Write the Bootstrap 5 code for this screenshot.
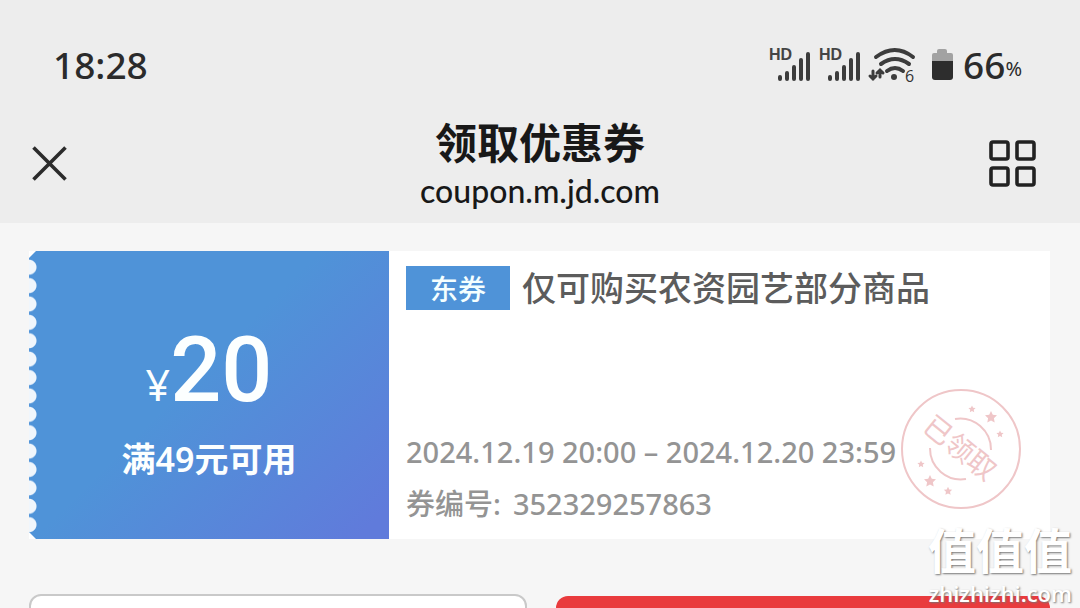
<!DOCTYPE html>
<html lang="zh-CN">
<head>
<meta charset="utf-8">
<meta name="viewport" content="width=device-width, initial-scale=1">
<title>领取优惠券</title>
<link href="https://cdn.jsdelivr.net/npm/bootstrap@5.3.0/dist/css/bootstrap.min.css" rel="stylesheet">
<style>
  body { font-family: "Noto Sans", "Noto Sans CJK SC", sans-serif; background: #f6f6f6; color: #2b2b2b; }
  .top-area { background: #ededed; height: 223px; }
  .status-line { padding: 40px 58px 0 53px; height: 90px; line-height: 50px; }
  .clock { font-size: 37px; font-weight: 500; }
  .level { font-size: 37px; font-weight: 500; }
  .level-unit { font-size: 20px; }
  .title-bar { display: grid; grid-template-columns: 1fr auto 1fr; align-items: center; padding: 14px 44px 0 32px; height: 132px; }
  .title-block { margin-left: 12px; }
  .page-title { font-size: 42px; line-height: 56px; font-weight: 700; color: #181818; }
  .page-host { font-family: Lato, sans-serif; font-size: 32px; line-height: 40px; font-weight: 500; color: #181818; }
  .content { padding: 28px 30px 0 29px; }
  .ticket { min-height: 288px; }
  .ticket-value { width: 360px; padding-top: 12px; color: #fcffff; background: linear-gradient(135deg, #4f93d8 45%, #607bdb 95%); clip-path: polygon(7px 0, 100% 0, 100% 100%, 7px 100%, 0 281px, 0 7px); }
  .ticket-value::before { content: ""; position: absolute; inset: 7px auto 5px 0; width: 8px; background: radial-gradient(circle at 0 50%, #f0f6fc 7px, transparent 8px) 0 0 / 8px 18px; background-repeat: no-repeat round; }
  .yuan { font-size: 43px; line-height: 60px; }
  .amount { font-family: Roboto, sans-serif; font-size: 90px; line-height: 104px; font-weight: 500; }
  .condition { font-size: 34px; line-height: 48px; font-weight: 600; margin-top: 12px; }
  .ticket-info { padding: 15px 16px 9px 17px; color: #949494; }
  .kind-tag { background: #4f93d8; color: #f4ffff; font-size: 28px; line-height: 46px; width: 104px; height: 44px; font-weight: 500; }
  .scope-text { font-size: 34px; line-height: 44px; color: #5c5c5c; }
  .meta-text { font-size: 29px; line-height: 52px; font-weight: 500; }
  .stamp { right: 28px; top: 138px; }
  .actions { padding-top: 55px; gap: 29px; }
  .act { height: 88px; border-radius: 12px; }
  .act-plain { background: #fff; border: 2px solid #c9c9c9; }
  .act-main { background: #e93b3d; margin-top: 2px; border: 0; }
  .wm { right: 8px; bottom: 2px; color: #fff; text-shadow: 1px 1px 2px #777; }
  .wm-name { font-size: 48px; line-height: 58px; font-weight: 700; }
  .wm-site { font-family: "Open Sans", sans-serif; font-size: 22px; line-height: 26px; font-weight: 600; }
</style>
</head>
<body>
<div class="vh-100 overflow-hidden position-relative">
  <header class="top-area">
    <div class="status-line d-flex justify-content-between">
      <span class="clock">18:28</span>
      <div class="d-flex align-items-center">
        <svg width="187" height="50" viewBox="767 40 187 50" aria-hidden="true">
          <g font-family="Liberation Sans, sans-serif" font-weight="700" font-size="16" fill="#444">
            <text x="768" y="60">HD</text><text x="818" y="60">HD</text>
          </g>
          <g stroke="#3c3c3c" stroke-width="4" stroke-linecap="round">
            <path d="M779 77v2M786 73v6M793 67v12M800 60v19M807 54v25M829 77v2M836 73v6M843 67v12M850 60v19M857 54v25"/>
            <path d="M875 57q19-14 37 0M880 64q14-10 28 0M886 71q8-6 16 0" fill="none"/>
            <path d="M872 71v8m-3-3l3 3 3-3M879 77v-7m-3 3l3-3 3 3" fill="none" stroke-width="3"/>
          </g>
          <circle cx="893" cy="77" r="3" fill="#3c3c3c"/>
          <text x="904" y="82" font-family="Open Sans, sans-serif" font-size="16" fill="#333">6</text>
          <path d="M936 51q0-2 2-2h6q2 0 2 2v2h4q2 0 2 2v6h-21v-6q0-2 2-2h3z" fill="#a2a2a2"/>
          <path d="M931 61h21v16q0 3-3 3h-15q-3 0-3-3z" fill="#2d2d2d"/>
        </svg>
        <span class="level ms-2">66</span><span class="level-unit pt-2">%</span>
      </div>
    </div>
    <nav class="title-bar" aria-label="页面">
      <button type="button" class="btn p-0 border-0 justify-self-start text-start" aria-label="关闭">
        <svg class="d-block" width="35" height="35" viewBox="0 0 35 35" stroke="#2b2b2b" stroke-width="3.6" fill="none"><path d="M1.500 1.500l32 32M33.500 1.500l-32 32"/></svg>
      </button>
      <div class="title-block text-center">
        <h1 class="page-title m-0">领取优惠券</h1>
        <div class="page-host">coupon.m.jd.com</div>
      </div>
      <button type="button" class="btn p-0 border-0" aria-label="更多">
        <svg class="d-block ms-auto" width="47" height="47" viewBox="0 0 47 47" stroke="#222" stroke-width="3.600" fill="none"><rect x="2" y="2" width="17" height="17" rx="2"/><rect x="28" y="2" width="17" height="17" rx="2"/><rect x="2" y="28" width="17" height="17" rx="2"/><rect x="28" y="28" width="17" height="17" rx="2"/></svg>
      </button>
    </nav>
  </header>

  <main class="content">
    <article class="ticket d-flex bg-white position-relative">
      <div class="ticket-value position-relative flex-shrink-0 d-flex flex-column align-items-center justify-content-center">
        <div class="d-flex align-items-baseline"><span class="yuan">¥</span><span class="amount">20</span></div>
        <div class="condition">满49元可用</div>
      </div>
      <div class="ticket-info flex-grow-1 d-flex flex-column justify-content-between">
        <div class="d-flex align-items-center">
          <span class="kind-tag text-center flex-shrink-0">东券</span>
          <h2 class="scope-text m-0 ms-2 ps-1 text-nowrap">仅可购买农资园艺部分商品</h2>
        </div>
        <div class="meta-text text-nowrap">
          <div>2024.12.19 20:00 – 2024.12.20 23:59</div>
          <div><span class="pe-2">券编号:</span><span class="ps-1">352329257863</span></div>
        </div>
      </div>
      <svg class="stamp position-absolute" width="121" height="121" viewBox="0 0 121 121" role="img" aria-label="已领取">
        <g fill="none" stroke="#efc6c8" stroke-width="2">
          <circle cx="60" cy="60" r="59"/>
          <path d="M54 30A31 31 0 0 1 90 61M29 59A31 31 0 0 0 65 90"/>
        </g>
        <defs><path id="star" d="M0-6l1.800 3.800 4.200.5-3.100 2.900.8 4.200L0 3.400l-3.700 2 .8-4.200L-6-1.700l4.200-.5z"/></defs>
        <g fill="#efc6c8">
          <use href="#star" transform="translate(90 28)"/><use href="#star" transform="translate(29 92)"/>
          <use href="#star" transform="translate(71 20) scale(.6)"/><use href="#star" transform="translate(99 45) scale(.6)"/>
          <use href="#star" transform="translate(20 75) scale(.6)"/><use href="#star" transform="translate(47 102) scale(.7)"/>
          <text transform="translate(59 59) rotate(39)" text-anchor="middle" y="10" font-family="Noto Sans CJK SC, sans-serif" font-weight="400" font-size="28">已领取</text>
        </g>
      </svg>
    </article>
    <div class="actions d-flex">
      <button type="button" class="act act-plain flex-fill" aria-label="返回"></button>
      <button type="button" class="act act-main flex-fill" aria-label="使用"></button>
    </div>
  </main>
  <div class="wm position-absolute text-end">
    <div class="wm-name">值值值</div>
    <div class="wm-site">zhizhizhi.com</div>
  </div>
</div>
<script src="https://cdn.jsdelivr.net/npm/bootstrap@5.3.0/dist/js/bootstrap.bundle.min.js"></script>
</body>
</html>
